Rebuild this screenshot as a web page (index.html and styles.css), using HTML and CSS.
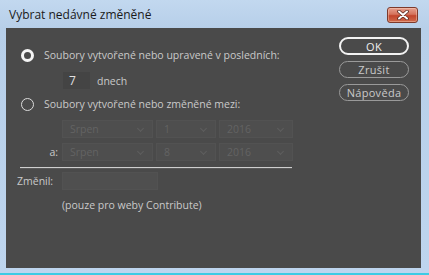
FILE: index.html
```html
<!DOCTYPE html>
<html lang="cs">
<head>
  <meta charset="UTF-8" />
  <title>Vybrat nedávné změněné</title>
  <link rel="stylesheet" href="styles.css">
</head>
<body>
  <div class="window">
    <div class="titlebar">
      <span class="title">Vybrat nedávné změněné</span>
      <button class="close-btn" aria-label="Zavřít">
        <svg width="14" height="10" viewBox="0 0 14 10">
          <path d="M3 1.5 L11 8.5 M11 1.5 L3 8.5" stroke="#5a2a20" stroke-width="3.6" stroke-linecap="round"/>
          <path d="M3 1.5 L11 8.5 M11 1.5 L3 8.5" stroke="#fff" stroke-width="2" stroke-linecap="round"/>
        </svg>
      </button>
    </div>

    <div class="content">
      <div class="form">
        <div class="row radio-row first">
          <span class="radio checked"></span>
          <span>Soubory vytvořené nebo upravené v posledních:</span>
        </div>

        <div class="row days-row">
          <span class="field days">7</span>
          <span>dnech</span>
        </div>

        <div class="row radio-row second">
          <span class="radio"></span>
          <span>Soubory vytvořené nebo změněné mezi:</span>
        </div>

        <div class="row date-row">
          <span class="label"></span>
          <span class="select month">Srpen</span>
          <span class="select day">1</span>
          <span class="select year">2016</span>
        </div>

        <div class="row date-row second-date">
          <span class="label">a:</span>
          <span class="select month">Srpen</span>
          <span class="select day">8</span>
          <span class="select year">2016</span>
        </div>

        <div class="divider"></div>

        <div class="row author-row">
          <span class="author-label">Změnil:</span>
          <span class="field author"></span>
        </div>

        <p class="note">(pouze pro weby Contribute)</p>
      </div>

      <div class="buttons">
        <button class="btn primary">OK</button>
        <button class="btn">Zrušit</button>
        <button class="btn">Nápověda</button>
      </div>
    </div>
    <div class="bottom-edge"></div>
  </div>
</body>
</html>
```

FILE: styles.css
```css
* {
  box-sizing: border-box;
  margin: 0;
  padding: 0;
}

body {
  width: 429px;
  height: 275px;
  overflow: hidden;
  background: #bcd4ec;
  font-family: 'Open Sans', 'Liberation Sans', sans-serif;
}

.window {
  width: 429px;
  height: 275px;
  background: linear-gradient(to bottom, #c2d8ef 0px, #b7cfe9 28px, #bed5ee 100%);
  display: flex;
  flex-direction: column;
}

.titlebar {
  height: 28px;
  display: flex;
  align-items: flex-start;
  justify-content: space-between;
  padding: 6px 11px 0 9px;
}

.title {
  font-family: 'Open Sans', sans-serif;
  font-size: 12px;
  color: #1a1a1a;
  line-height: 16px;
  margin-top: 1px;
}

.close-btn {
  width: 31px;
  height: 16px;
  margin-top: 1px;
  border: 1px solid #7d3a2c;
  border-radius: 3px;
  background: linear-gradient(to bottom, #e6a08f 0%, #d5735c 45%, #c2452c 55%, #cf6a4c 100%);
  display: flex;
  align-items: center;
  justify-content: center;
  box-shadow: inset 0 0 0 1px rgba(255, 220, 200, 0.4);
}

.content {
  margin: 0 8px 0 6px;
  height: 240px;
  background: #4a4a4a;
  display: flex;
  justify-content: space-between;
  color: #c9c9c9;
  font-size: 10.5px;
}

.form {
  width: 290px;
  padding: 19px 0 0 14px;
  display: flex;
  flex-direction: column;
}

.row {
  display: flex;
  align-items: center;
}

.radio-row {
  height: 16px;
  gap: 10px;
  padding-left: 1px;
}

.radio {
  width: 13px;
  height: 13px;
  border-radius: 50%;
  border: 1.5px solid #dcdcdc;
  flex-shrink: 0;
}

.radio.checked {
  border: 3.5px solid #f4f4f4;
}

.days-row {
  margin-top: 9px;
  padding-left: 43px;
  gap: 7px;
  height: 17px;
}

.field {
  background: #444;
  height: 17px;
  display: flex;
  align-items: center;
}

.days {
  width: 27px;
  padding-left: 6px;
  color: #e0e0e0;
  font-size: 12px;
}

.radio-row.second {
  margin-top: 7px;
}

.date-row {
  margin-top: 8px;
  gap: 3px;
  height: 18px;
}

.date-row.second-date {
  margin-top: 5px;
}

.label {
  width: 39px;
  text-align: right;
  padding-right: 1px;
}

.select {
  height: 18px;
  background: #4e4e4e;
  border: 1px solid #525252;
  color: #636363;
  padding-left: 7px;
  display: flex;
  align-items: center;
  position: relative;
}

.select::after {
  content: "";
  position: absolute;
  right: 9px;
  top: 5px;
  width: 4px;
  height: 4px;
  border-right: 1px solid #5e5e5e;
  border-bottom: 1px solid #5e5e5e;
  transform: rotate(45deg);
}

.month { width: 91px; }
.day { width: 60px; }
.year { width: 74px; }

.divider {
  margin-top: 6px;
  width: 272px;
  height: 2px;
  background: #cfcfcf;
  border-bottom: 1px solid #5a5a5a;
}

.author-row {
  margin-top: 3px;
  margin-left: -3px;
  gap: 7px;
}

.author-label {
  width: 38px;
}

.author {
  width: 96px;
  height: 18px;
  background: #4f4f4f;
  border: 1px solid #525252;
}

.note {
  margin: 8px 0 0 42px;
  line-height: 14px;
}

.buttons {
  width: 70px;
  margin: 9px 12px 0 0;
  display: flex;
  flex-direction: column;
  gap: 6px;
}

.btn {
  height: 17px;
  border: 1px solid #9a9a9a;
  border-radius: 9px;
  background: #4a4a4a;
  color: #c9c9c9;
  font-family: 'Open Sans', sans-serif;
  font-size: 11px;
  letter-spacing: 0.3px;
}

.btn.primary {
  height: 18px;
  border: 2px solid #f2f2f2;
  color: #f0f0f0;
}

.bottom-edge {
  margin-top: auto;
  height: 2px;
  background: #3ccbe4;
}
```
